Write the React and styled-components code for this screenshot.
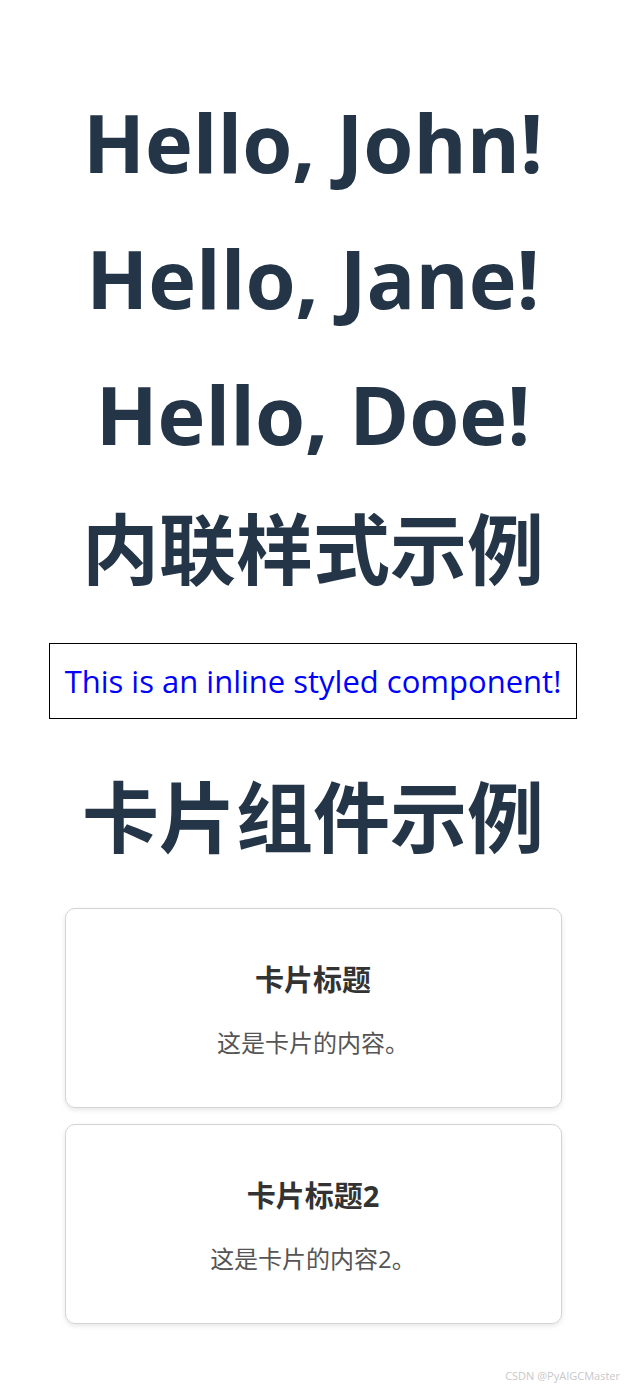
import React from 'react';
import styled, { createGlobalStyle } from 'styled-components';

const GlobalStyle = createGlobalStyle`
  body {
    margin: 0;
    background: #ffffff;
    font-family: "Open Sans", "Noto Sans CJK SC", sans-serif;
  }
`;

const Page = styled.div`
  width: 626px;
  min-height: 1388px;
  display: flex;
  flex-direction: column;
  align-items: center;
  padding-top: 74px;
  box-sizing: border-box;
`;

const Heading = styled.h1`
  margin: 0;
  font-size: ${(p) => (p.$cjk ? '77px' : '81px')};
  font-weight: 700;
  line-height: 136px;
  text-align: center;
  color: #233547;
  white-space: nowrap;
`;

const InlineBox = styled.div`
  margin-top: 25px;
  margin-bottom: 31px;
  width: 528px;
  height: 76px;
  box-sizing: border-box;
  border: 1px solid #000;
  display: flex;
  align-items: center;
  justify-content: center;
  color: #0000ff;
  font-size: 31px;
  white-space: nowrap;
`;

const CardList = styled.div`
  margin-top: 22px;
  display: flex;
  flex-direction: column;
  gap: 16px;
`;

const Card = styled.div`
  width: 497px;
  height: 200px;
  box-sizing: border-box;
  padding-top: 4px;
  border: 1px solid #d4d4d4;
  border-radius: 10px;
  box-shadow: 0 2px 5px rgba(0, 0, 0, 0.1);
  display: flex;
  flex-direction: column;
  align-items: center;
  justify-content: center;
`;

const CardTitle = styled.h2`
  margin: 0 0 26px;
  font-size: 29px;
  line-height: 40px;
  font-weight: 700;
  color: #333;
`;

const CardText = styled.p`
  margin: 0;
  font-size: 24px;
  line-height: 34px;
  color: #555;
`;

const Watermark = styled.div`
  align-self: flex-end;
  margin-top: auto;
  padding: 0 6px 5px 0;
  font-size: 11px;
  color: #c8c8c8;
`;

const greetings = ['John', 'Jane', 'Doe'];

const cards = [
  { title: '卡片标题', content: '这是卡片的内容。' },
  { title: '卡片标题2', content: '这是卡片的内容2。' },
];

export default function App() {
  return (
    <>
      <GlobalStyle />
      <Page>
        {greetings.map((name) => (
          <Heading key={name}>Hello, {name}!</Heading>
        ))}
        <Heading $cjk>内联样式示例</Heading>
        <InlineBox>This is an inline styled component!</InlineBox>
        <Heading $cjk>卡片组件示例</Heading>
        <CardList>
          {cards.map((c) => (
            <Card key={c.title}>
              <CardTitle>{c.title}</CardTitle>
              <CardText>{c.content}</CardText>
            </Card>
          ))}
        </CardList>
        <Watermark>CSDN @PyAIGCMaster</Watermark>
      </Page>
    </>
  );
}
